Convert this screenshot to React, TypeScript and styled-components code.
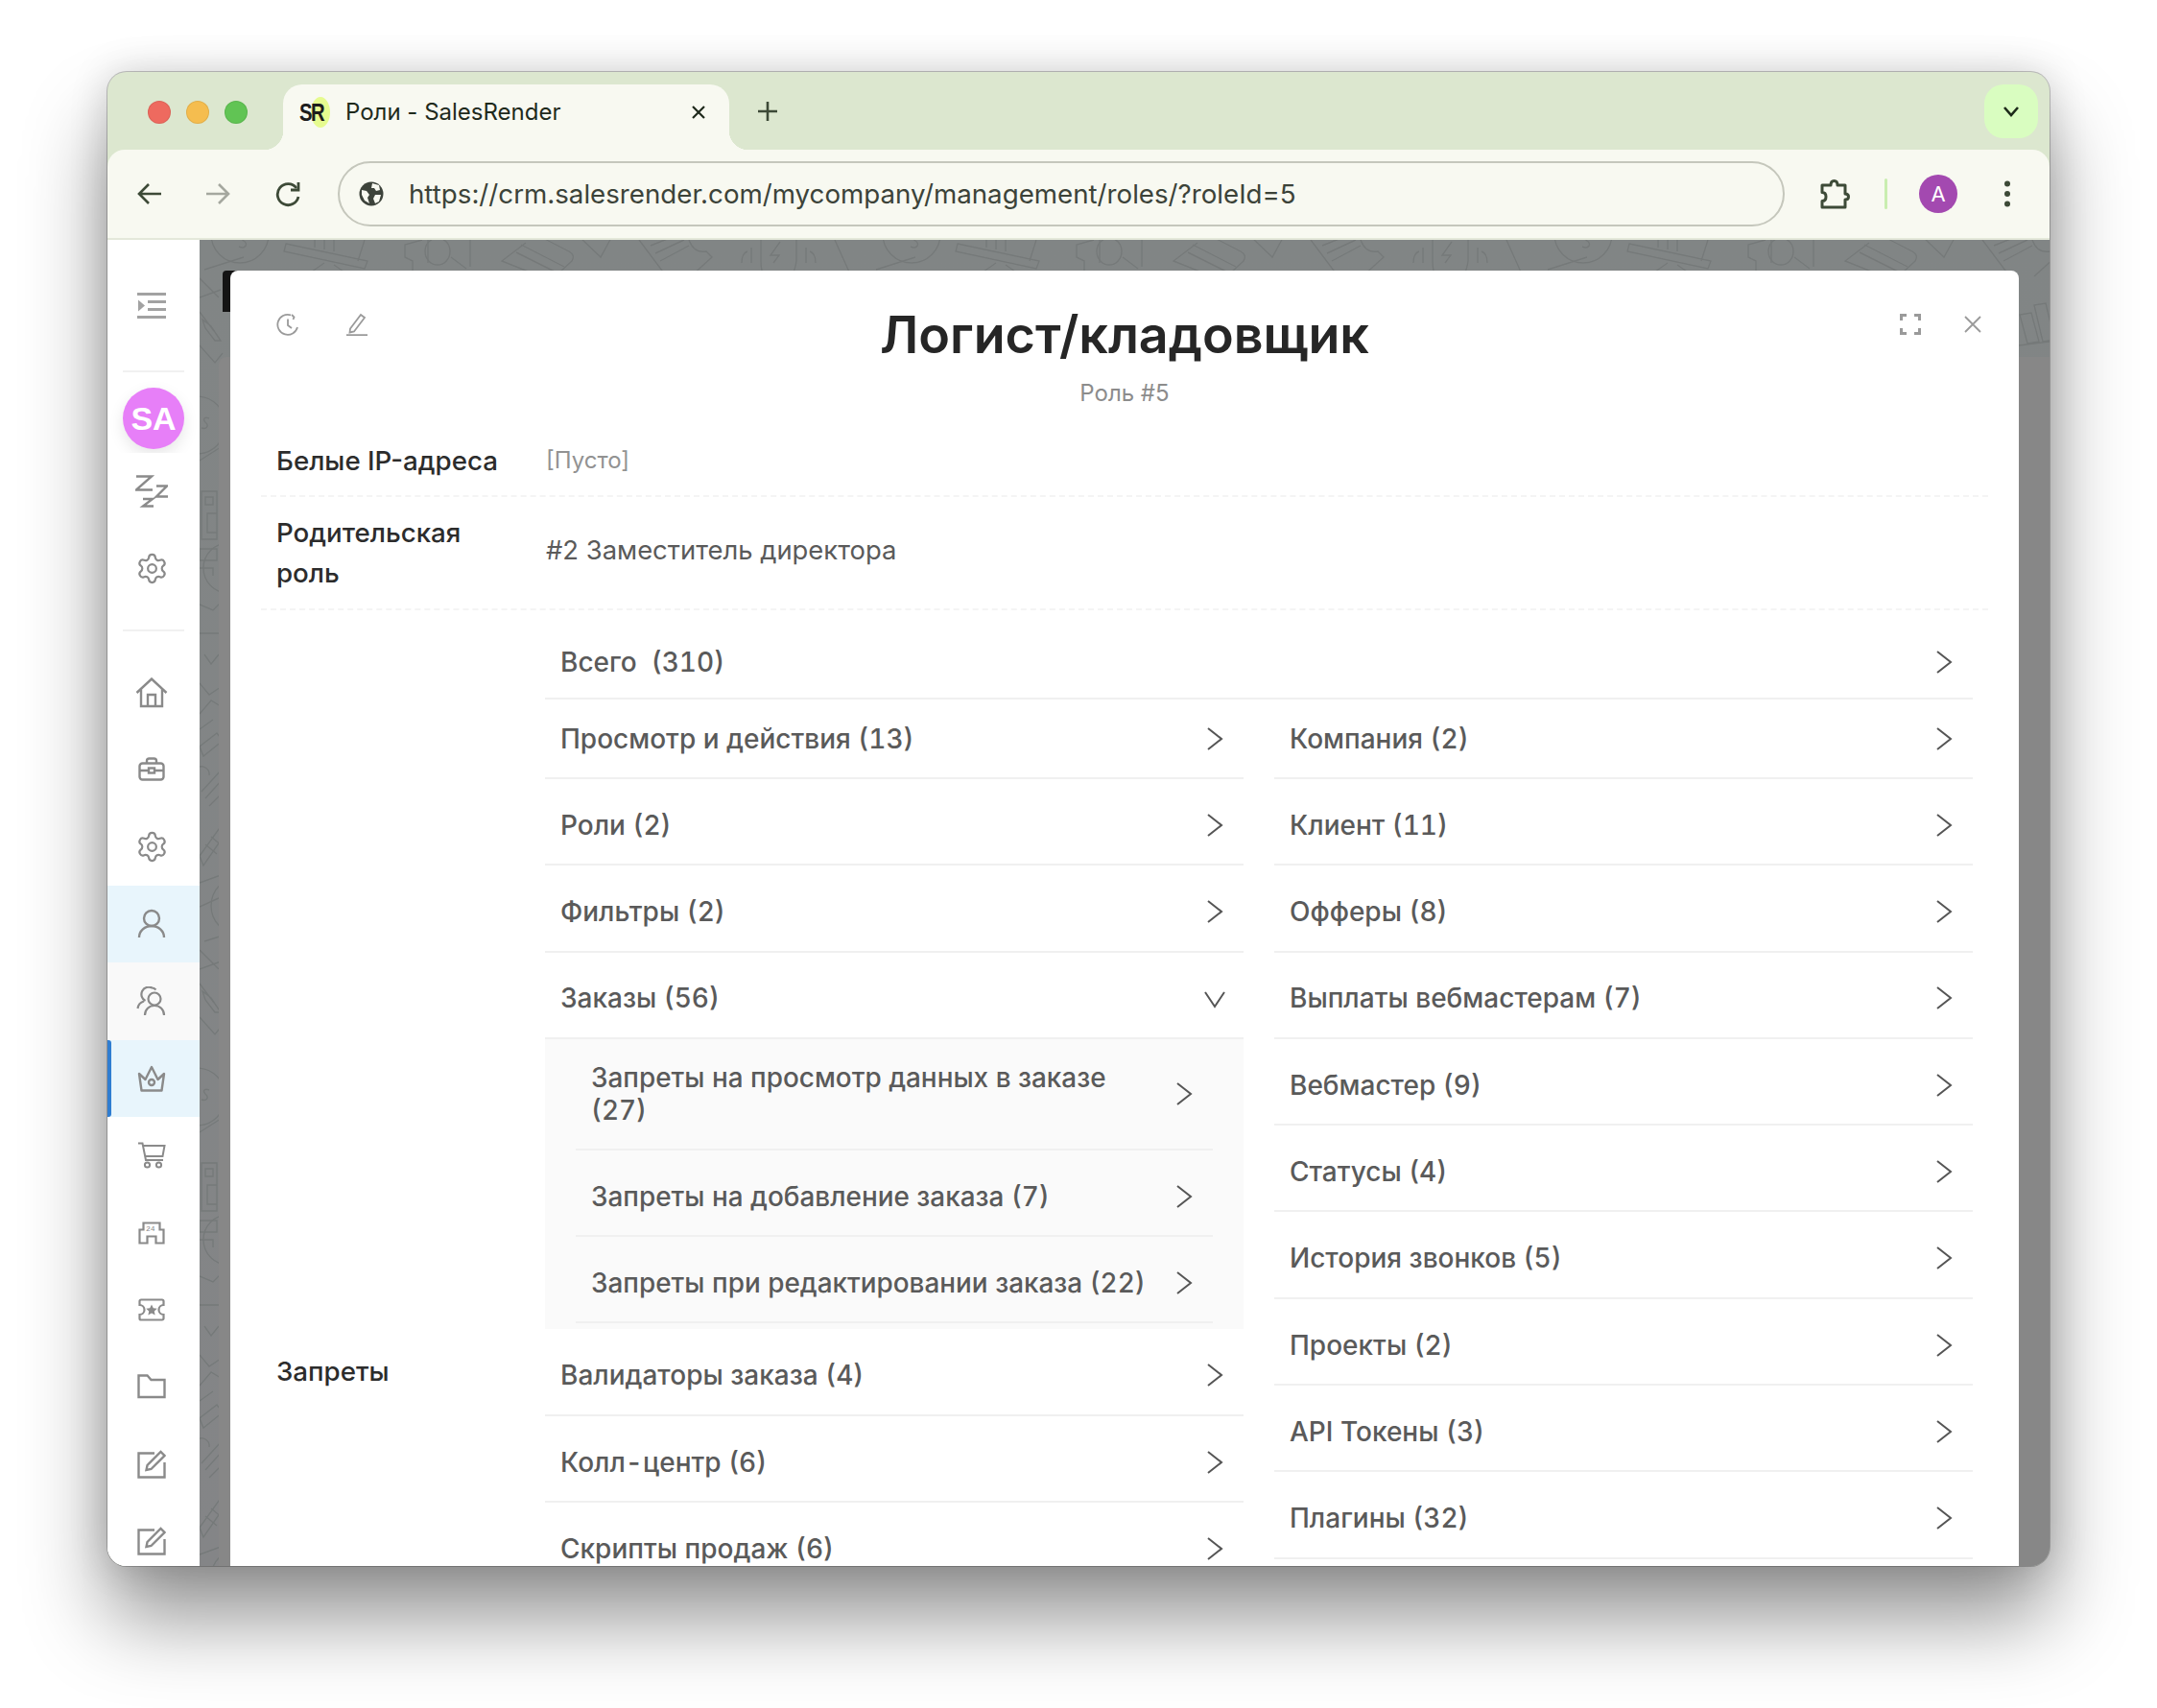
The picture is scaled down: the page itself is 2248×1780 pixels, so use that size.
import styled, { createGlobalStyle } from 'styled-components';
import { Settings } from 'lucide-react';

const GlobalStyle = createGlobalStyle`
    html, body {
        margin: 0;
        background: #fff;
    }
    * {
        box-sizing: border-box;
    }
`;

const Page = styled.div`
    width: 2248px;
    height: 1780px;
    padding: 75px 112px 148px;
    overflow: hidden;
    font-family: Inter, "Noto Sans", sans-serif;
`;

const Window = styled.div`
    width: 2024px;
    height: 1557px;
    display: flex;
    flex-direction: column;
    overflow: hidden;
    background: #dce7cf;
    border-radius: 20px;
    box-shadow: 0 0 0 1px rgba(0, 0, 0, .22), 0 55px 85px rgba(0, 0, 0, .42), 0 0 40px rgba(0, 0, 0, .16);
`;

const TabStrip = styled.div`
    height: 81px;
    flex: none;
    display: flex;
    align-items: flex-end;
    padding-left: 183px;
    position: relative;
`;

const Lights = styled.div`
    position: absolute;
    left: 42px;
    top: 30px;
    display: flex;
    gap: 16px;
`;

const Light = styled.span<{ $color: string }>`
    width: 24px;
    height: 24px;
    border-radius: 50%;
    background: ${p => p.$color};
    box-shadow: inset 0 0 0 1px rgba(0, 0, 0, .08);
`;

const Tab = styled.div`
    width: 465px;
    height: 68px;
    display: flex;
    align-items: center;
    padding: 0 0 10px 17px;
    background: #f8f9f1;
    border-radius: 20px 20px 0 0;
    position: relative;

    &::before, &::after {
        content: '';
        position: absolute;
        bottom: 0;
        width: 20px;
        height: 20px;
    }
    &::before {
        left: -20px;
        background: radial-gradient(circle at 0 0, transparent 20px, #f8f9f1 20.5px);
    }
    &::after {
        right: -20px;
        background: radial-gradient(circle at 100% 0, transparent 20px, #f8f9f1 20.5px);
    }
`;

const Favicon = styled.div`
    width: 32px;
    height: 32px;
    position: relative;
    display: flex;
    align-items: center;
    font-size: 26px;
    font-weight: 700;
    letter-spacing: -2px;
    color: #1d1d1d;
    font-family: "Liberation Sans", sans-serif;

    &::before {
        content: '';
        position: absolute;
        right: 0;
        top: 0;
        width: 20px;
        height: 32px;
        border-radius: 50%;
        background: #e6fb8f;
    }

    span {
        position: relative;
        transform: scaleX(.78);
        transform-origin: left center;
    }
`;

const TabTitle = styled.div`
    margin-left: 16px;
    margin-top: -2px;
    flex: 1;
    font-size: 24px;
    color: #1f2a1c;
`;

const TabClose = styled.svg`
    margin-right: 24px;
`;

const NewTab = styled.svg`
    margin: 0 0 29px 29px;
`;

const TabList = styled.div`
    position: absolute;
    right: 12px;
    top: 13px;
    width: 56px;
    height: 56px;
    border-radius: 20px;
    background: #d9fdc0;
    display: flex;
    align-items: center;
    justify-content: center;
`;

const Toolbar = styled.div`
    height: 94px;
    flex: none;
    display: flex;
    align-items: center;
    background: #f8f9f1;
    border-radius: 18px 18px 0 0;
    border-bottom: 2px solid #e4e8da;
    position: relative;
`;

const NavButton = styled.div<{ $x: number }>`
    width: 32px;
    height: 32px;
    margin-left: ${p => p.$x}px;
    display: flex;
    align-items: center;
    justify-content: center;
`;

const Omnibox = styled.div`
    width: 1508px;
    height: 68px;
    margin-left: 36px;
    flex: none;
    display: flex;
    align-items: center;
    padding-left: 20px;
    border: 2px solid #c5c7bc;
    border-radius: 34px;
`;

const Url = styled.div`
    margin-left: 26px;
    font-size: 27.7px;
    color: #3c4339;
    white-space: nowrap;
`;

const ToolSeparator = styled.span`
    width: 3px;
    height: 32px;
    margin-left: 36px;
    background: #c9eeb0;
    border-radius: 2px;
`;

const Profile = styled.div`
    width: 40px;
    height: 40px;
    margin-left: 33px;
    border-radius: 50%;
    background: #a349b0;
    color: #fff;
    font-size: 22px;
    display: flex;
    align-items: center;
    justify-content: center;
`;

const Main = styled.div`
    flex: 1;
    min-height: 0;
    display: flex;
`;

const Sidebar = styled.nav`
    width: 96px;
    flex: none;
    background: #fff;
    display: flex;
    flex-direction: column;
    align-items: center;
    overflow: hidden;
`;

const BurgerRow = styled.div`
    width: 100%;
    height: 136px;
    flex: none;
    display: flex;
    align-items: center;
    justify-content: center;
    padding-right: 4px;
`;

const SideDivider = styled.div<{ $top?: number }>`
    width: 64px;
    height: 2px;
    flex: none;
    margin-top: ${p => p.$top ?? 0}px;
    background: #f1f1f1;
`;

const Avatar = styled.div`
    width: 64px;
    height: 64px;
    flex: none;
    margin: 16px 0 4px;
    border-radius: 50%;
    background: #e77ff8;
    color: #fff;
    font: 700 34px "Liberation Sans", sans-serif;
    display: flex;
    align-items: center;
    justify-content: center;
    box-shadow: 0 6px 16px rgba(0, 0, 0, .1);
`;

const SideItem = styled.div<{ $tone?: 'active' | 'hover'; $marked?: boolean }>`
    width: 100%;
    height: 80.4px;
    flex: none;
    display: flex;
    align-items: center;
    justify-content: center;
    padding-right: 4px;
    position: relative;
    background: ${p => p.$tone === 'active' ? '#e8f5fc' : p.$tone === 'hover' ? '#f9f9f9' : '#fff'};

    &::before {
        content: '';
        display: ${p => p.$marked ? 'block' : 'none'};
        position: absolute;
        left: 0;
        top: 0;
        bottom: 0;
        width: 4px;
        border-radius: 0 3px 3px 0;
        background: #2f7dd1;
    }
`;

const SideList = styled.div`
    width: 100%;
    margin-top: 24px;
    display: flex;
    flex-direction: column;
`;

const Stage = styled.div`
    flex: 1;
    min-width: 0;
    position: relative;
    overflow: hidden;
    background: linear-gradient(180deg, #818585 0%, #848587 100%);
`;

const Doodles = styled.svg`
    position: absolute;
    inset: 0;
    width: 100%;
    height: 100%;
`;

const Sheet = styled.div`
    position: absolute;
    left: 20px;
    top: 122px;
    right: 0;
    bottom: 0;
    background: #878787;
    border-radius: 8px 0 0 0;
`;

const BlackTab = styled.div`
    position: absolute;
    left: 24px;
    top: 32px;
    width: 16px;
    height: 43px;
    background: #141414;
    border-radius: 4px 0 0 0;
`;

const Modal = styled.div`
    position: absolute;
    left: 32px;
    right: 32px;
    top: 32px;
    height: 2000px;
    padding: 0 32px;
    background: #fff;
    border-radius: 8px 8px 0 0;
`;

const ModalHeader = styled.header`
    height: 161px;
    display: grid;
    grid-template-columns: 1fr auto 1fr;
`;

const HeaderIcons = styled.div<{ $end?: boolean }>`
    display: flex;
    align-items: center;
    justify-content: ${p => p.$end ? 'flex-end' : 'flex-start'};
    height: 24px;
    margin-top: 44px;
    padding: ${p => p.$end ? '0 7px 0 0' : '0 0 0 16px'};
    gap: ${p => p.$end ? '45px' : '48px'};
`;

const HeaderTitle = styled.div`
    text-align: center;
    padding-top: 34px;
`;

const Title = styled.h1`
    margin: 0;
    font-size: 53.8px;
    line-height: 66px;
    font-weight: 600;
    color: #262626;
`;

const Subtitle = styled.div`
    margin-top: 13px;
    font-size: 24px;
    line-height: 30px;
    color: #8c8c8c;
`;

const FieldRow = styled.div<{ $height: number }>`
    display: flex;
    align-items: center;
    min-height: ${p => p.$height}px;
    border-bottom: 2px dashed #f4f4f4;
`;

const BareRow = styled.div<{ $height: number }>`
    display: flex;
    align-items: center;
    height: ${p => p.$height}px;
`;

const FieldLabel = styled.div`
    width: 296px;
    flex: none;
    padding: 0 30px 0 16px;
    font-size: 27.7px;
    line-height: 42px;
    font-weight: 500;
    color: #2c2c2c;
`;

const FieldValue = styled.div<{ $muted?: boolean }>`
    padding-left: 1px;
    font-size: ${p => p.$muted ? 24 : 27.4}px;
    color: ${p => p.$muted ? '#929292' : '#5a5a5a'};
    margin-top: ${p => p.$muted ? 0 : -6}px;
`;

const Permissions = styled.div`
    width: 1488px;
    align-self: flex-start;
    padding-top: 17px;
`;

const Columns = styled.div`
    display: grid;
    grid-template-columns: 728px 728px;
    column-gap: 32px;
    align-items: start;
`;

const Column = styled.div`
    display: flex;
    flex-direction: column;
`;

const PermRow = styled.div<{ $first?: boolean; $height?: number }>`
    height: ${p => p.$height ?? 83}px;
    margin-top: ${p => p.$first ? 0 : 7.3}px;
    display: flex;
    align-items: center;
    justify-content: space-between;
    padding: 0 19px 0 16px;
    border-bottom: 2px solid #f0f0f0;
    font-size: 28px;
    font-weight: 500;
    font-variant-numeric: tabular-nums;
    color: #5a5a5a;
`;

const SubPanel = styled.div`
    background: #fafafa;
    padding: 0 32px 6px;
`;

const SubRow = styled.div<{ $first?: boolean }>`
    height: ${p => p.$first ? 116 : 83}px;
    margin-top: ${p => p.$first ? 0 : 7.3}px;
    display: flex;
    align-items: center;
    justify-content: space-between;
    padding: 0 19px 0 16px;
    border-bottom: 2px solid #f0f0f0;
    font-size: 27.9px;
    line-height: 34px;
    font-weight: 500;
    font-variant-numeric: tabular-nums;
    color: #5a5a5a;

    span {
        max-width: 585px;
    }
`;

const Chevron = ({ down }: { down?: boolean }) => (
    <svg width="22" height="24" viewBox="0 0 22 24" fill="none" stroke="#555" strokeWidth="2">
        {down ? <path d="M1 6l10 15L21 6" /> : <path d="M4 1l14 11L4 23" />}
    </svg>
);

const gray = '#8a8a8a';

const HomeIcon = () => (
    <svg width="34" height="32" viewBox="0 0 34 32" fill="none" stroke={gray} strokeWidth="2.4">
        <path d="M1.5 16L17 1.5 32.5 16" />
        <path d="M6 12.5V30h22V12.5" />
        <path d="M13 30V18h8v12" />
    </svg>
);

const BagIcon = () => (
    <svg width="28" height="26" viewBox="0 0 28 26" fill="none" stroke={gray} strokeWidth="2.4">
        <rect x="1.5" y="6.5" width="25" height="17" rx="3" />
        <path d="M9 6.5V4a2.5 2.5 0 0 1 2.5-2.5h5A2.5 2.5 0 0 1 19 4v2.5" />
        <path d="M1.5 14h9m7 0h9" />
        <rect x="11" y="11.5" width="6" height="5" />
    </svg>
);

const UserIcon = () => (
    <svg width="30" height="32" viewBox="0 0 30 32" fill="none" stroke={gray} strokeWidth="2.4">
        <circle cx="15" cy="10" r="8" />
        <path d="M2 30c0-7 6-12 13-12s13 5 13 12" />
    </svg>
);

const UsersIcon = () => (
    <svg width="32" height="32" viewBox="0 0 32 32" fill="none" stroke={gray} strokeWidth="2.2">
        <circle cx="19" cy="13" r="6.5" />
        <path d="M9 30c0-6 4.5-10 10-10s10 4 10 10" />
        <path d="M9.5 15a7 7 0 0 1 7-13.5c2 0 3 1 4 2" />
        <path d="M1.5 23c.5-4 3-6.5 6.5-7.5" />
    </svg>
);

const CrownIcon = () => (
    <svg width="30" height="28" viewBox="0 0 30 28" fill="none" stroke={gray} strokeWidth="2.4">
        <path d="M2 9l6.500 6L15 2l6.500 13L28 9l-2.500 17.500h-21z" strokeLinejoin="round" />
        <circle cx="15" cy="18" r="3" />
    </svg>
);

const CartIcon = () => (
    <svg width="30" height="28" viewBox="0 0 30 28" fill="none" stroke={gray} strokeWidth="2">
        <path d="M1 1.5h4.5L9 19h18" />
        <path d="M6 4h22.5l-2 11H8.5" />
        <circle cx="10.5" cy="24" r="2.6" />
        <circle cx="22.5" cy="24" r="2.6" />
    </svg>
);

const ShopText = styled.text`
    font: 400 8px "Liberation Mono", monospace;
    fill: ${gray};
`;

const StoreIcon = () => (
    <svg width="28" height="24" viewBox="0 0 28 24" fill="none" stroke={gray} strokeWidth="2.2">
        <path d="M1.5 22.5V8.500h4v-7h17v7h4v14h-8v-7h-9v7z" />
        <ShopText x="8" y="10" stroke="none">24</ShopText>
    </svg>
);

const TicketIcon = () => (
    <svg width="28" height="24" viewBox="0 0 28 24" fill="none" stroke={gray} strokeWidth="2.2">
        <path d="M3 1.5h22a1.5 1.5 0 0 1 1.5 1.5v4a5 5 0 0 0 0 10v4a1.5 1.5 0 0 1-1.5 1.5H3A1.5 1.5 0 0 1 1.5 21v-4a5 5 0 0 0 0-10V3A1.5 1.5 0 0 1 3 1.5z" />
        <path d="M14 6.5l1.800 3.700 4 .5-3 2.700.8 4-3.600-2-3.600 2 .8-4-3-2.700 4-.5z" fill={gray} stroke="none" />
    </svg>
);

const FolderIcon = () => (
    <svg width="30" height="26" viewBox="0 0 30 26" fill="none" stroke={gray} strokeWidth="2.4">
        <path d="M1.5 24V1.5h9l4 4.500h14v18z" />
    </svg>
);

const EditIcon = () => (
    <svg width="30" height="30" viewBox="0 0 30 30" fill="none" stroke={gray} strokeWidth="2.4">
        <path d="M18 3.5H1.5v25h27V13" />
        <path d="M9.5 21l1-5L24.500 2l4 4-14 14z" />
    </svg>
);

const sideItems = [
    { icon: <HomeIcon /> },
    { icon: <BagIcon /> },
    { icon: <Settings size={35} color={gray} strokeWidth={1.5} /> },
    { icon: <UserIcon />, tone: 'active' as const },
    { icon: <UsersIcon />, tone: 'hover' as const },
    { icon: <CrownIcon />, tone: 'active' as const, marked: true },
    { icon: <CartIcon /> },
    { icon: <StoreIcon /> },
    { icon: <TicketIcon /> },
    { icon: <FolderIcon /> },
    { icon: <EditIcon /> },
    { icon: <EditIcon /> },
];

const leftTop = ['Просмотр и действия (13)', 'Роли (2)', 'Фильтры (2)'];
const orderRows = [
    'Запреты на просмотр данных в заказе (27)',
    'Запреты на добавление заказа (7)',
    'Запреты при редактировании заказа (22)',
];
const leftBottom = ['Валидаторы заказа (4)', 'Колл-центр (6)', 'Скрипты продаж (6)'];
const rightRows = [
    'Компания (2)',
    'Клиент (11)',
    'Офферы (8)',
    'Выплаты вебмастерам (7)',
    'Вебмастер (9)',
    'Статусы (4)',
    'История звонков (5)',
    'Проекты (2)',
    'API Токены (3)',
    'Плагины (32)',
];

function Pattern() {
    return (
        <Doodles>
            <defs>
                <pattern id="doodles" width="700" height="700" patternUnits="userSpaceOnUse" y="-100">
                    <g transform="translate(0 100)" fill="none" stroke="#757979" strokeWidth="1.4">
                        <circle cx="42" cy="-6" r="30" />
                        <path d="M50 -4c-6-2-8 2-4 5 5 3 2 9-5 6" />
                        <path d="M46 18L5 31" />
                        <path d="M90 4l85 18-3 8-84-18zM120 8V0m10 10V0m10 12V0M172 0l-7 22M130 24l-20 14M140 26l20 14" />
                        <path d="M232 0l-18 5v13l8 4v10M262 18l16 12M282 0v28" />
                        <ellipse cx="248" cy="12" rx="13" ry="14" />
                        <path d="M238 0v24M340 3l-25 19 30 12M375 34l13-12q4-6-3-10L350-6M335 5l45 23M330 13l42 21M395-4l23 22 12-22" />
                        <path d="M458 0l30 40M470 6l25-10M475 14l30-14M480 22l30-16M510 0q5 14 18 12l6 6-22 20" />
                        <path d="M585 0v22q0 23 17 23t20-23V0M605 2l-10 14h9l-6 8M575 24V8M632 24V8M565 24q0-10 6-12M642 24q0-10-6-12M662 0l18 40" />
                        <path d="M497 78l12-2 8 30-12 2zM512 68l12-2 9 38-12 2zM496 110l40-5" />
                        <path d="M0 75l15 20M0 110l16 18 8-10M3 83l9 7 10 15h-6L6 92zM0 60l22-8M0 40l20 20" />
                        <circle cx="-3" cy="193" r="30" />
                        <path d="M10 186c-5-2-7 1-4 4 4 3 2 8-4 6M0 230l22-14" />
                        <path d="M2 262h16v50H2zM8 285h10v20H8zM0 322h18v12H0zM6 268h8v8H6zM0 342h14v8" />
                        <circle cx="30" cy="342" r="26" />
                        <path d="M0 380l14 6 8-8M0 410h22M5 432l7 10 8-10M0 462l10 12 12-8M0 494l12-14 10 6M0 510l14-10" />
                        <path d="M0 528l18-14 6 8-20 16zM-2 550a8 8 0 0 1 12 8M2 575l20-22M6 582l18-20M10 590l14-14" />
                        <path d="M0 -58l20-28 6 6-22 32zM6 -70l12 10M12 -78l12 10M0 -30l22-8M0 -5l22-10" />
                    </g>
                </pattern>
            </defs>
            <rect width="100%" height="100%" fill="url(#doodles)" />
        </Doodles>
    );
}

export default function App() {
    return (
        <Page>
            <GlobalStyle />
            <Window>
                <TabStrip>
                    <Lights>
                        <Light $color="#ee6a5f" />
                        <Light $color="#f5bd4f" />
                        <Light $color="#61c454" />
                    </Lights>
                    <Tab>
                        <Favicon><span>SR</span></Favicon>
                        <TabTitle>Роли - SalesRender</TabTitle>
                        <TabClose width="16" height="16" viewBox="0 0 16 16" stroke="#1f2a1c" strokeWidth="2.2">
                            <path d="M2 2l12 12M14 2L2 14" />
                        </TabClose>
                    </Tab>
                    <NewTab width="22" height="22" viewBox="0 0 22 22" stroke="#3d4a37" strokeWidth="2.6">
                        <path d="M11 1v20M1 11h20" />
                    </NewTab>
                    <TabList>
                        <svg width="18" height="12" viewBox="0 0 18 12" fill="none" stroke="#1d2a1a" strokeWidth="2.6">
                            <path d="M2 2l7 8 7-8" />
                        </svg>
                    </TabList>
                </TabStrip>
                <Toolbar>
                    <NavButton $x={28}>
                        <svg width="26" height="24" viewBox="0 0 26 24" fill="none" stroke="#3d4a37" strokeWidth="2.6">
                            <path d="M25 12H3M12 2L2 12l10 10" />
                        </svg>
                    </NavButton>
                    <NavButton $x={39}>
                        <svg width="26" height="24" viewBox="0 0 26 24" fill="none" stroke="#a5a89f" strokeWidth="2.6">
                            <path d="M1 12h22M14 2l10 10-10 10" />
                        </svg>
                    </NavButton>
                    <NavButton $x={41}>
                        <svg width="28" height="28" viewBox="0 0 28 28" fill="none" stroke="#3d4a37" strokeWidth="2.8">
                            <path d="M23 8a11 11 0 1 0 2 9" />
                            <path d="M25 2v8h-8" />
                        </svg>
                    </NavButton>
                    <Omnibox>
                        <svg width="26" height="26" viewBox="0 0 26 26">
                            <circle cx="13" cy="13" r="12.5" fill="#3d433b" />
                            <path d="M3 9l5 1 3 4-2 3 2 6-5-3-3-6zM14 2l7 2 1 5-4 1-2-3-3 0zM17 14l6 0-2 7-4 2-2-5z" fill="#f8f9f1" />
                        </svg>
                        <Url>https://crm.salesrender.com/mycompany/management/roles/?roleId=5</Url>
                    </Omnibox>
                    <NavButton $x={36}>
                        <svg width="32" height="32" viewBox="0 0 32 32" fill="none" stroke="#3d4a37" strokeWidth="3">
                            <path d="M3 7h9q0-4.500 3.500-4.500T19 7h8v9q3.500 0 3.500 3T27 22v8H3v-6.500q4 0 4-4.500t-4-4.500z" strokeLinejoin="round" />
                        </svg>
                    </NavButton>
                    <ToolSeparator />
                    <Profile>A</Profile>
                    <NavButton $x={36}>
                        <svg width="8" height="28" viewBox="0 0 8 28" fill="#3d4a37">
                            <circle cx="4" cy="3.5" r="3" />
                            <circle cx="4" cy="14" r="3" />
                            <circle cx="4" cy="24.5" r="3" />
                        </svg>
                    </NavButton>
                </Toolbar>
                <Main>
                    <Sidebar>
                        <BurgerRow>
                            <svg width="30" height="27" viewBox="0 0 30 27" fill="none" stroke="#a2a2a2" strokeWidth="3">
                                <path d="M0 1.5h30M11 9.500h19M11 17.500h19M0 25.500h30" />
                                <path d="M1 7.5l7 6-7 6z" fill="#a2a2a2" stroke="none" />
                            </svg>
                        </BurgerRow>
                        <SideDivider />
                        <Avatar>SA</Avatar>
                        <SideItem>
                            <svg width="34" height="34" viewBox="0 0 34 34" fill="none" stroke={gray} strokeWidth="2.4">
                                <path d="M1 1.5h16L1 15.5h17M22 11.5h11L22 22.5h12M8 25h10L8 32.5h11" />
                            </svg>
                        </SideItem>
                        <SideItem>
                            <Settings size={35} color={gray} strokeWidth={1.5} />
                        </SideItem>
                        <SideDivider $top={23} />
                        <SideList>
                            {sideItems.map((item, i) => (
                                <SideItem key={i} $tone={item.tone} $marked={item.marked}>{item.icon}</SideItem>
                            ))}
                        </SideList>
                    </Sidebar>
                    <Stage>
                        <Pattern />
                        <Sheet />
                        <BlackTab />
                        <Modal>
                            <ModalHeader>
                                <HeaderIcons>
                                    <svg width="24" height="24" viewBox="0 0 24 24" fill="none" stroke="#9a9a9a" strokeWidth="1.8">
                                        <path d="M15 2.300A10.500 10.500 0 1 0 22 15M12 6.500V13l4 3M16 2l2.500 2.500-1 2.500" />
                                    </svg>
                                    <svg width="24" height="24" viewBox="0 0 24 24" fill="none" stroke="#9a9a9a" strokeWidth="1.8">
                                        <path d="M5 16.500L16 2l4 3-11 14.500-4.500 1zM1 23.200h22" />
                                    </svg>
                                </HeaderIcons>
                                <HeaderTitle>
                                    <Title>Логист/кладовщик</Title>
                                    <Subtitle>Роль #5</Subtitle>
                                </HeaderTitle>
                                <HeaderIcons $end>
                                    <svg width="22" height="22" viewBox="0 0 22 22" fill="none" stroke="#9a9a9a" strokeWidth="3">
                                        <path d="M1.5 7V1.5H7M15 1.5h5.500V7M20.500 15v5.500H15M7 20.500H1.5V15" />
                                    </svg>
                                    <svg width="18" height="18" viewBox="0 0 18 18" fill="none" stroke="#9a9a9a" strokeWidth="1.8">
                                        <path d="M1 1l16 16M17 1L1 17" />
                                    </svg>
                                </HeaderIcons>
                            </ModalHeader>
                            <FieldRow $height={75}>
                                <FieldLabel>Белые IP-адреса</FieldLabel>
                                <FieldValue $muted>[Пусто]</FieldValue>
                            </FieldRow>
                            <FieldRow $height={118}>
                                <FieldLabel>Родительская роль</FieldLabel>
                                <FieldValue>#2 Заместитель директора</FieldValue>
                            </FieldRow>
                            <BareRow $height={1586}>
                                <FieldLabel>Запреты</FieldLabel>
                                <Permissions>
                                    <PermRow $first $height={76}>
                                        <span>Всего&nbsp; (310)</span>
                                        <Chevron />
                                    </PermRow>
                                    <Columns>
                                        <Column>
                                            {leftTop.map((name, i) => (
                                                <PermRow key={name} $first={i === 0}>
                                                    <span>{name}</span>
                                                    <Chevron />
                                                </PermRow>
                                            ))}
                                            <PermRow>
                                                <span>Заказы (56)</span>
                                                <Chevron down />
                                            </PermRow>
                                            <SubPanel>
                                                {orderRows.map((name, i) => (
                                                    <SubRow key={name} $first={i === 0}>
                                                        <span>{name}</span>
                                                        <Chevron />
                                                    </SubRow>
                                                ))}
                                            </SubPanel>
                                            {leftBottom.map(name => (
                                                <PermRow key={name}>
                                                    <span>{name}</span>
                                                    <Chevron />
                                                </PermRow>
                                            ))}
                                        </Column>
                                        <Column>
                                            {rightRows.map((name, i) => (
                                                <PermRow key={name} $first={i === 0}>
                                                    <span>{name}</span>
                                                    <Chevron />
                                                </PermRow>
                                            ))}
                                        </Column>
                                    </Columns>
                                </Permissions>
                            </BareRow>
                        </Modal>
                    </Stage>
                </Main>
            </Window>
        </Page>
    );
}
